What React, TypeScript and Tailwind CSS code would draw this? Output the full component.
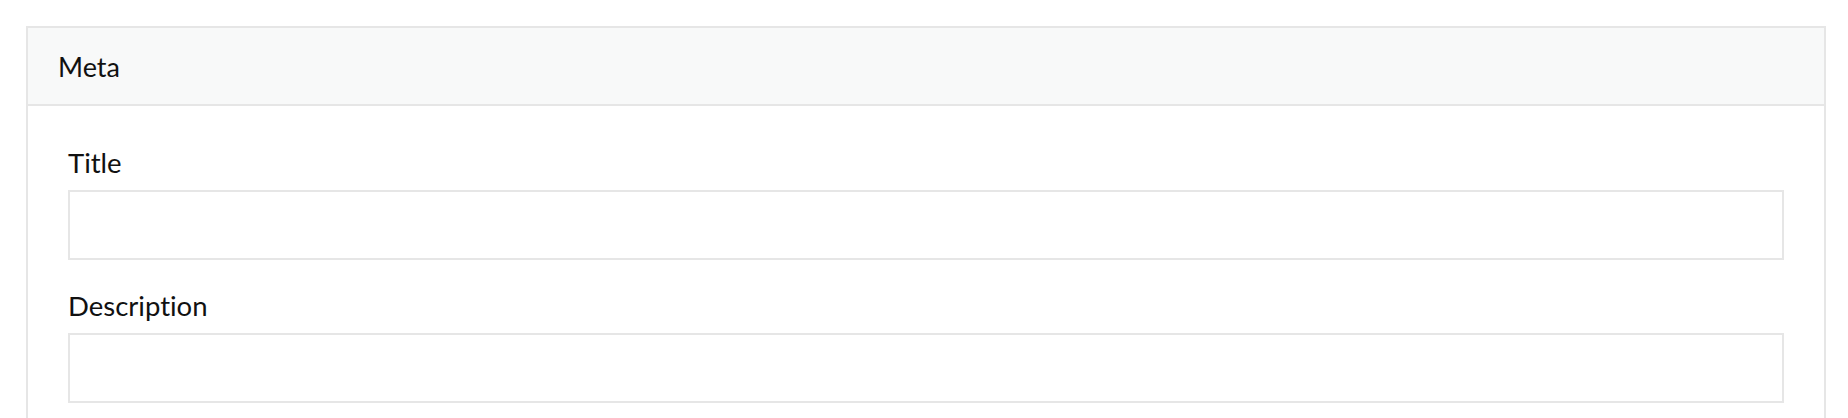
export default function App() {
  const fields = ['Title', 'Description'];
  return (
    <div className="min-h-screen bg-white pt-[26px] pl-[26px] pr-[22px] font-['Lato',sans-serif] text-[#111] [font-variant-ligatures:none]">
      <div className="border-2 border-[#e6e6e6] bg-white">
        {/* Header */}
        <div className="flex h-[78px] items-center border-b-2 border-[#e6e6e6] bg-[#f8f9f9] px-[30px]">
          <span className="text-[27px] leading-[31px]">Meta</span>
        </div>

        {/* Body */}
        <div className="px-[40px] pt-[41px] pb-[40px]">
          {fields.map((label, i) => (
            <div key={label} className={i > 0 ? 'mt-[30px]' : ''}>
              <label className="block text-[27.5px] leading-[31px]">{label}</label>
              <input
                type="text"
                className="mt-[12px] block h-[70px] w-full border-2 border-[#e6e6e6] bg-white px-3 outline-none"
              />
            </div>
          ))}
        </div>
      </div>
    </div>
  );
}
